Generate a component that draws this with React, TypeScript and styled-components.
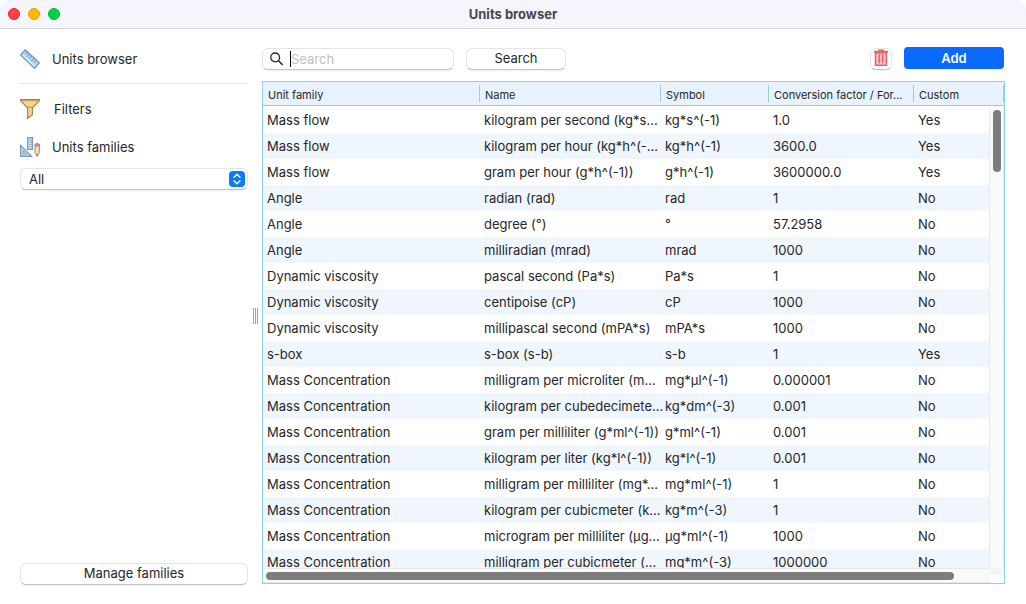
import React from "react";
import styled, { createGlobalStyle } from "styled-components";

const GlobalStyle = createGlobalStyle`
  *, *::before, *::after { box-sizing: border-box; }
  body {
    margin: 0;
    background: #fff;
    color: #262626;
    font-family: Inter, "Liberation Sans", sans-serif;
    font-size: 13px;
    line-height: 16px;
  }
  button, input, select { font: inherit; color: inherit; margin: 0; }
`;

const Window = styled.div`
  display: flex;
  flex-direction: column;
  height: 100vh;
  overflow: hidden;
`;

const TitleBar = styled.header`
  display: grid;
  grid-template-columns: 1fr auto 1fr;
  align-items: center;
  flex: none;
  height: 29px;
  padding: 0 8px;
  background: #f5f5fe;
  border-bottom: 1px solid #d6d6da;
  border-radius: 10px 10px 0 0;
`;

const TrafficLights = styled.div`
  display: flex;
  gap: 8px;
`;

const Light = styled.button<{ $fill: string; $edge: string }>`
  width: 12px;
  height: 12px;
  padding: 0;
  border: 1px solid ${(p) => p.$edge};
  border-radius: 50%;
  background: ${(p) => p.$fill};
`;

const Title = styled.h1`
  margin: 0;
  padding-bottom: 1px;
  font-size: 13px;
  font-weight: 700;
  color: #48484c;
`;

const Body = styled.div`
  display: flex;
  flex: 1;
  min-height: 0;
`;

const Sidebar = styled.aside`
  display: flex;
  flex-direction: column;
  flex: none;
  width: 248px;
  padding: 18px 0 19px 20px;
`;

const SideRow = styled.div<{ $gap: number }>`
  display: flex;
  align-items: center;
  gap: ${(p) => p.$gap}px;
  height: 24px;

  svg { flex: none; }
`;

const Rule = styled.hr`
  width: 100%;
  height: 1px;
  margin: 12px 0 13px;
  border: 0;
  background: #e2e2e2;
`;

const Families = styled.label`
  display: block;
  margin-top: 14px;
`;

const SelectWrap = styled.span`
  display: block;
  position: relative;
  margin-top: 9px;

  svg {
    position: absolute;
    top: 3px;
    right: 3px;
    pointer-events: none;
  }
`;

const raised = `
  border: 1px solid #e4e4e4;
  border-bottom-color: #c4c4c4;
  border-radius: 6px;
  background: #fff;
  box-shadow: 0 1px 1px rgba(0, 0, 0, 0.06);
`;

const Select = styled.select`
  ${raised}
  display: block;
  appearance: none;
  width: 100%;
  height: 22px;
  padding: 0 24px 1px 8px;
`;

const PushButton = styled.button<{ $width?: string }>`
  ${raised}
  width: ${(p) => p.$width ?? "100px"};
  height: 22px;
  padding: 0 0 2px;
`;

const Spacer = styled.div`
  flex: 1;
`;

const Splitter = styled.div`
  display: flex;
  justify-content: center;
  align-items: center;
  gap: 1px;
  flex: none;
  width: 14px;
  padding-bottom: 2px;
`;

const Grip = styled.span`
  width: 1px;
  height: 16px;
  background: #a0a0a0;
`;

const Main = styled.main`
  display: flex;
  flex-direction: column;
  flex: 1;
  min-width: 0;
  padding: 18px 21px 20px 0;
`;

const Toolbar = styled.div`
  display: flex;
  align-items: center;
  gap: 12px;
  height: 24px;
  margin: 0 1px 10px 0;
`;

const SearchField = styled.label`
  ${raised}
  display: flex;
  align-items: center;
  width: 192px;
  height: 22px;
  padding: 0 7px;

  svg { margin-right: 6px; flex: none; }
`;

const Caret = styled.span`
  flex: none;
  width: 1px;
  height: 16px;
  background: #000;
`;

const SearchInput = styled.input`
  flex: 1;
  min-width: 0;
  height: 20px;
  padding: 0;
  border: 0;
  outline: 0;
  background: none;

  &::placeholder { color: #bfbfbf; opacity: 1; }
`;

const DeleteButton = styled.button`
  ${raised}
  display: grid;
  place-items: center;
  width: 22px;
  height: 22px;
  padding: 0 0 2px;
`;

const AddButton = styled.button`
  align-self: flex-start;
  width: 100px;
  height: 22px;
  padding: 0;
  border: 0;
  border-radius: 4px;
  background: #0a6aff;
  color: #fff;
  font-weight: 600;
`;

const TableFrame = styled.section`
  position: relative;
  flex: 1;
  min-height: 0;
  overflow: hidden;
  border: 1px solid #8fd0ee;
`;

const Table = styled.table`
  width: 100%;
  table-layout: fixed;
  border-collapse: separate;
  border-spacing: 0;
`;

const HeadCell = styled.th`
  height: 25px;
  padding: 3px 0 4px;
  background: #e8f2fc;
  border-bottom: 1px solid #fff;
  box-shadow: inset 0 -1px #8fd0ee;
  font-size: 11px;
  font-weight: 400;
  line-height: 14px;
  text-align: left;
  white-space: nowrap;

  span {
    display: block;
    padding: 3px 0 0 5px;
    border-right: 1px solid #8fd0ee;
  }
`;

const Row = styled.tr`
  &:nth-child(even) { background: #eff6fd; }
`;

const Cell = styled.td`
  height: 26px;
  padding: 0 0 0 4px;
  white-space: nowrap;
`;

const VerticalTrack = styled.div`
  position: absolute;
  top: 25px;
  right: 0;
  bottom: 15px;
  width: 15px;
  padding: 3px;
  background: #fafafa;
  border: solid #e8e8e8;
  border-width: 0 1px;
`;

const HorizontalTrack = styled.div`
  position: absolute;
  left: 0;
  right: 14px;
  bottom: 0;
  height: 15px;
  padding: 3px;
  background: #fafafa;
  border: solid #e8e8e8;
  border-width: 1px 0;
`;

const Thumb = styled.div<{ $width: string; $height: string }>`
  width: ${(p) => p.$width};
  height: ${(p) => p.$height};
  border-radius: 4px;
  background: #7d7d7d;
`;

const RulerIcon = () => (
  <svg width="20" height="20" viewBox="0 0 20 20" aria-hidden="true">
    <path d="M5.3.8 19.3 13.8 14.6 19.2.7 6Z" fill="#b5d8f5" stroke="#7598bd" strokeWidth="1.3" strokeLinejoin="round" />
    <path d="m3 6.2 11.6 11" fill="none" stroke="#dcedfb" strokeWidth="1.4" />
    <path d="m7 2.8-1.8 2M9.3 5 6.8 7.8M11.7 7.2l-1.9 2.1M14 9.3l-2.5 2.8M16.3 11.5l-1.9 2.1" stroke="#7598bd" strokeWidth="1.1" />
  </svg>
);

const FunnelIcon = () => (
  <svg width="20" height="20" viewBox="0 0 20 20" aria-hidden="true">
    <path d="M.6.7h18.8v1L12.4 8.8v7L7.6 19.4V8.8L.6 1.7Z" fill="#fdd38c" stroke="#a28653" strokeWidth="1.2" />
    <path d="M1.2 1.7h17.6M7.8 8.2h4.4" stroke="#bd9555" />
  </svg>
);

const FamiliesIcon = () => (
  <svg width="20" height="20" viewBox="0 0 20 20" aria-hidden="true">
    <path d="M7.6.6h4.9v11.8H7.6Z" fill="#c4e1f6" stroke="#7899bd" strokeWidth="1.2" />
    <path d="M9.5 3H12M9.5 5.2H12M9.5 7.4H12M9.5 9.6H12" stroke="#7899bd" strokeWidth=".8" />
    <path d="M.6 8.4v11h11Z" fill="#b5d8f5" stroke="#7899bd" strokeWidth="1.2" />
    <path d="M3.2 13.7v3.2h3.3Z" fill="#fff" stroke="#7899bd" />
    <path d="M15 7.5q2.2-2.2 4.4 0v8.3l-2.2 3.6-2.2-3.6Z" fill="#fdd9a0" stroke="#9c978f" />
    <path d="M15 9V7.5q2.2-2.2 4.4 0V9Z" fill="#e68a8a" stroke="#a98f96" />
    <path d="m16 17.2 1.2 2.2 1.2-2.2Z" fill="#6b7c91" />
  </svg>
);

const StepperIcon = () => (
  <svg width="16" height="16" viewBox="0 0 16 16" aria-hidden="true">
    <rect width="16" height="16" rx="4" fill="#087bff" />
    <path d="m5 6.3 3-3 3 3M5 9.7l3 3 3-3" fill="none" stroke="#fff" strokeWidth="1.5" strokeLinecap="round" strokeLinejoin="round" />
  </svg>
);

const SearchIcon = () => (
  <svg width="14" height="14" viewBox="0 0 14 14" aria-hidden="true">
    <circle cx="5.2" cy="5.4" r="4.4" fill="none" stroke="#262626" strokeWidth="1.3" />
    <path d="m8.5 8.7 3.8 3.8" stroke="#262626" strokeWidth="1.5" strokeLinecap="round" />
  </svg>
);

const TrashIcon = () => (
  <svg width="16" height="18" viewBox="0 0 16 18" aria-hidden="true">
    <path d="M2.5 4h11v12.3h-11Z" fill="#f8c3c4" stroke="#dc686c" strokeWidth="1.6" />
    <path d="M1 2.8h14M5 1.6h6" stroke="#dc686c" strokeWidth="2" />
    <path d="M6.3 5.5v8.8M9.7 5.5v8.8" stroke="#dc686c" strokeWidth="1.6" />
  </svg>
);

const columns = [
  { label: "Unit family", width: "217px" },
  { label: "Name", width: "181px" },
  { label: "Symbol", width: "108px" },
  { label: "Conversion factor / For...", width: "145px" },
  { label: "Custom", width: "auto" },
];

const units = [
  ["Mass flow", "kilogram per second (kg*s...", "kg*s^(-1)", "1.0", "Yes"],
  ["Mass flow", "kilogram per hour (kg*h^(-...", "kg*h^(-1)", "3600.0", "Yes"],
  ["Mass flow", "gram per hour (g*h^(-1))", "g*h^(-1)", "3600000.0", "Yes"],
  ["Angle", "radian (rad)", "rad", "1", "No"],
  ["Angle", "degree (°)", "°", "57.2958", "No"],
  ["Angle", "milliradian (mrad)", "mrad", "1000", "No"],
  ["Dynamic viscosity", "pascal second (Pa*s)", "Pa*s", "1", "No"],
  ["Dynamic viscosity", "centipoise (cP)", "cP", "1000", "No"],
  ["Dynamic viscosity", "millipascal second (mPA*s)", "mPA*s", "1000", "No"],
  ["s-box", "s-box (s-b)", "s-b", "1", "Yes"],
  ["Mass Concentration", "milligram per microliter (m...", "mg*µl^(-1)", "0.000001", "No"],
  ["Mass Concentration", "kilogram per cubedecimete...", "kg*dm^(-3)", "0.001", "No"],
  ["Mass Concentration", "gram per milliliter (g*ml^(-1))", "g*ml^(-1)", "0.001", "No"],
  ["Mass Concentration", "kilogram per liter (kg*l^(-1))", "kg*l^(-1)", "0.001", "No"],
  ["Mass Concentration", "milligram per milliliter (mg*...", "mg*ml^(-1)", "1", "No"],
  ["Mass Concentration", "kilogram per cubicmeter (k...", "kg*m^(-3)", "1", "No"],
  ["Mass Concentration", "microgram per milliliter (µg...", "µg*ml^(-1)", "1000", "No"],
  ["Mass Concentration", "milligram per cubicmeter (...", "mg*m^(-3)", "1000000", "No"],
];

export default function App() {
  return (
    <Window>
      <GlobalStyle />
      <TitleBar>
        <TrafficLights>
          <Light $fill="#ff4245" $edge="#e8232b" aria-label="Close" />
          <Light $fill="#ffb900" $edge="#e8a000" aria-label="Minimize" />
          <Light $fill="#00cf43" $edge="#00b535" aria-label="Zoom" />
        </TrafficLights>
        <Title>Units browser</Title>
      </TitleBar>
      <Body>
        <Sidebar>
          <SideRow $gap={12}>
            <RulerIcon />
            Units browser
          </SideRow>
          <Rule />
          <SideRow $gap={14}>
            <FunnelIcon />
            Filters
          </SideRow>
          <Families>
            <SideRow as="span" $gap={12}>
              <FamiliesIcon />
              Units families
            </SideRow>
            <SelectWrap>
              <Select defaultValue="All">
                <option>All</option>
              </Select>
              <StepperIcon />
            </SelectWrap>
          </Families>
          <Spacer />
          <PushButton $width="100%">Manage families</PushButton>
        </Sidebar>
        <Splitter>
          <Grip />
          <Grip />
          <Grip />
        </Splitter>
        <Main>
          <Toolbar>
            <SearchField>
              <SearchIcon />
              <Caret />
              <SearchInput placeholder="Search" aria-label="Search units" />
            </SearchField>
            <PushButton>Search</PushButton>
            <Spacer />
            <DeleteButton aria-label="Delete">
              <TrashIcon />
            </DeleteButton>
            <AddButton>Add</AddButton>
          </Toolbar>
          <TableFrame>
            <Table>
              <colgroup>
                {columns.map((c) => (
                  <col key={c.label} width={c.width} />
                ))}
              </colgroup>
              <thead>
                <tr>
                  {columns.map((c) => (
                    <HeadCell key={c.label} scope="col">
                      <span>{c.label}</span>
                    </HeadCell>
                  ))}
                </tr>
              </thead>
              <tbody>
                {units.map((unit) => (
                  <Row key={unit[1]}>
                    {unit.map((value, i) => (
                      <Cell key={i}>{value}</Cell>
                    ))}
                  </Row>
                ))}
              </tbody>
            </Table>
            <VerticalTrack>
              <Thumb $width="8px" $height="62px" />
            </VerticalTrack>
            <HorizontalTrack>
              <Thumb $width="calc(100% - 33px)" $height="8px" />
            </HorizontalTrack>
          </TableFrame>
        </Main>
      </Body>
    </Window>
  );
}
